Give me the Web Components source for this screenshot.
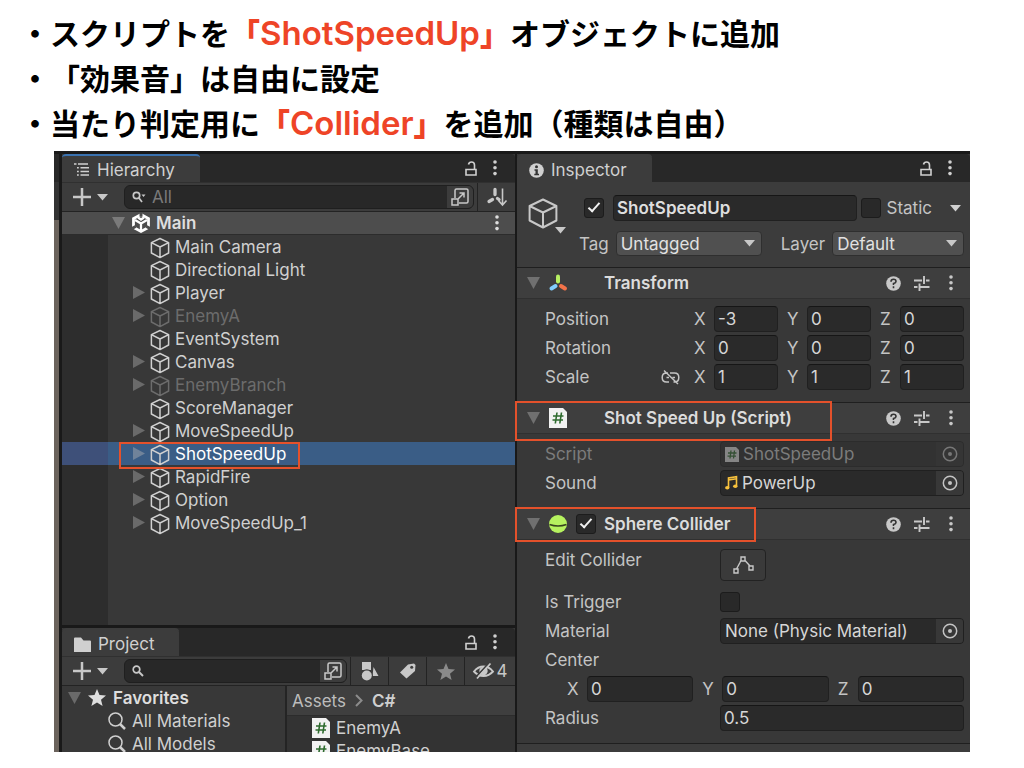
<!DOCTYPE html>
<html lang="ja">
<head>
<meta charset="utf-8">
<meta name="viewport" content="width=device-width, initial-scale=1">
<title>ShotSpeedUp</title>
<style>
  body { margin: 0; background: #fff; }
</style>
</head>
<body>
<lesson-slide></lesson-slide>

<script>
const BASE = `
  *, *::before, *::after { box-sizing: border-box; }
  button, input, select { font: inherit; font-optical-sizing: inherit; color: inherit; margin: 0; }
  button { display: inline-flex; align-items: center; justify-content: center; padding: 0; border: 0; background: none; }
`;

function component(name, css, html, setup) {
  const template = document.createElement('template');
  template.innerHTML = `<style>${BASE}${css}</style>${html}`;
  customElements.define(name, class extends HTMLElement {
    constructor() {
      super();
      this.attachShadow({ mode: 'open' }).append(template.content.cloneNode(true));
    }
    connectedCallback() {
      if (setup && !this.ready) { this.ready = true; setup(this, this.shadowRoot); }
    }
  });
}

/* name: [width, height, drawing] */
const ICONS = {
  cube: [20, 22, '<path d="M10 1.5 18.6 5.6V16L10 20.6 1.4 16V5.6ZM1.4 5.6 10 10l8.600-4.400M10 10v10.600" fill="none" stroke="currentColor" stroke-width="1.500" stroke-linejoin="round"/>'],
  bigcube: [30, 31, '<path d="M15 1.500 28.400 8v14.500L15 29.500 1.600 22.500V8ZM1.600 8 15 14.500 28.400 8M15 14.500v15" fill="none" stroke="currentColor" stroke-width="2" stroke-linejoin="round"/>'],
  down: [11, 8, '<path d="M0 1h11L5.500 7.500Z" fill="currentColor"/>'],
  fold: [13, 12, '<path d="M0 0h13L6.500 12Z" fill="currentColor"/>'],
  right: [12, 13, '<path d="M0 0 12 6.500 0 13Z" fill="currentColor"/>'],
  plus: [18, 18, '<path d="M9 0v18M0 9h18" stroke="currentColor" stroke-width="2.500"/>'],
  list: [16, 14, '<path d="M0 1h2.500M4 1H14M6.500 4.700H15M6.500 8.400H15M6.500 12H15M3 4.700h1.800M3 8.400h1.800M3 12h1.800" stroke="currentColor" stroke-width="1.500"/>'],
  info: [15, 15, '<circle cx="7.500" cy="7.500" r="7.300" fill="currentColor"/><circle cx="7.500" cy="3.800" r="1.500" fill="#333"/><path d="M5.500 6.300h3.300v4.500h1.200v1.400H5.300v-1.400h1.200V7.700h-1Z" fill="#333"/>'],
  folder: [17, 15, '<path d="M0 1.500Q0 .5 1 .5h6l2.500 3H16q1 0 1 1V15H0Z" fill="currentColor"/>'],
  lock: [12, 15, '<path d="M1 8.500h10v5.500H1ZM9.500 8V4Q9.500 1 6.500 1 4 1 3.500 3.500" fill="none" stroke="currentColor" stroke-width="1.600"/>'],
  dots: [4, 16, '<g fill="currentColor"><circle cx="2" cy="2" r="1.800"/><circle cx="2" cy="7.800" r="1.800"/><circle cx="2" cy="13.600" r="1.800"/></g>'],
  searchmenu: [14, 12, '<circle cx="4.500" cy="4.500" r="3.200" fill="none" stroke="currentColor" stroke-width="1.700"/><path d="m7 7 3 4" stroke="currentColor" stroke-width="1.700"/><path d="M9.500 3.500h4L11.500 6Z" fill="currentColor"/>'],
  search: [12, 12, '<circle cx="4.500" cy="4.500" r="3.300" fill="none" stroke="currentColor" stroke-width="1.700"/><path d="m7 7 4 4" stroke="currentColor" stroke-width="2"/>'],
  find: [18, 18, '<circle cx="7.500" cy="7.500" r="6.500" fill="none" stroke="currentColor" stroke-width="1.500"/><path d="m12 12 5 5" stroke="currentColor" stroke-width="2.500"/>'],
  expand: [18, 18, '<path d="M4 10V2.500Q4 1 5.500 1H15.500Q17 1 17 2.500V13.500Q17 15 15.500 15H8M1 11h6v6H1ZM7.500 10.500 13 5M8.500 5H13V9.500" fill="none" stroke="currentColor" stroke-width="1.500"/>'],
  sort: [20, 18, '<g stroke="currentColor" fill="none"><path d="M8 1.500v5M5.500 11.500 2 13.500M10.500 10.500l1.500 1" stroke-width="3.300" stroke-linecap="round"/><path d="M15.500.5V17M11.500 12.500l4 4.500 4-4.500" stroke-width="1.600"/></g>'],
  scene: [18, 20, '<path d="M9 1.500 16.500 5.500v9L9 18.500 1.500 14.500v-9Z" fill="none" stroke="currentColor" stroke-width="2.800"/><path d="M9 0v3.500M0 15.500l3.500-2M18 15.500l-3.500-2" stroke="#4d4d4d" stroke-width="3"/><path d="M9 17.500V10.500L3 7M9 10.500 15 7M6 4.500 9 6.500l3-2" fill="none" stroke="currentColor" stroke-width="2.300"/>'],
  star: [18, 17, '<path d="m9 0 2.500 6 6.500.5-5 4.200L14.600 17 9 13.500 3.400 17 5 10.700 0 6.500 6.500 6Z" fill="currentColor"/>'],
  shapes: [18, 19, '<path d="M1 0h9v8H1ZM12.500 5 17.500 14h-6Z" fill="currentColor"/><circle cx="5.800" cy="13.300" r="6" fill="#3c3c3c"/><circle cx="5.800" cy="13.500" r="5" fill="currentColor"/>'],
  tag: [16, 16, '<path d="M8 1.500 14 .5 15.500 2 15 8 6.500 15.500 0 9.500Z" fill="currentColor"/><circle cx="11.700" cy="4.300" r="1.500" fill="#3c3c3c"/>'],
  hidden: [21, 16, '<path d="M1 8.500Q5 3.500 10.500 3.500T20 8.500Q16 13 10.500 13T1 8.500Z" fill="none" stroke="currentColor" stroke-width="1.900"/><circle cx="10.500" cy="8" r="4.200" fill="currentColor"/><path d="M2.500 14.500 16 0" stroke="#3c3c3c" stroke-width="1.800"/><path d="M4 15.500 17.500.5" stroke="currentColor" stroke-width="1.800"/>'],
  chevron: [8, 13, '<path d="m1 1 5.500 5.500L1 12" fill="none" stroke="currentColor" stroke-width="2"/>'],
  script: [18, 20, '<path d="M0 0h14l4 4v16H0Z" fill="#f2f2f2"/><path d="M8 4.500 6.300 15.500M12.500 4.500l-1.700 11M4 8h10.500M3.500 12H14" stroke="#2e6b2e" stroke-width="1.600"/>'],
  scriptsmall: [14, 15, '<path d="M0 0h11l3 3v12H0Z" fill="#858585"/><path d="M6 3.500l-1 8M9.500 3.500l-1 8M3 6h8.500M2.500 9.200H11" stroke="#355035" stroke-width="1.300"/>'],
  move: [18, 18, '<g stroke-width="4" stroke-linecap="round"><path d="M9 2.500v5" stroke="#b8f062"/><path d="M6.500 12 2.500 14.500" stroke="#82cfff"/><path d="m12 12 4 2.500" stroke="#f27249"/></g>'],
  sphere: [18, 18, '<circle cx="9" cy="9" r="9" fill="#b6f25f"/><path d="M.5 9.500Q9 12.500 17.500 9.500" fill="none" stroke="#38451f" stroke-width="1.500"/>'],
  music: [13, 14, '<path d="M3.500 11.500V2l8-1.300V10M3.500 4 11.500 2.700" fill="none" stroke="#f7c13d" stroke-width="1.600"/><ellipse cx="2.300" cy="11.800" rx="2.200" ry="1.800" fill="#f7c13d"/><ellipse cx="10.300" cy="10.300" rx="2.200" ry="1.800" fill="#f7c13d"/>'],
  help: [15, 15, '<circle cx="7.500" cy="7.500" r="7.300" fill="currentColor"/><path d="M5 5.800Q5 3.300 7.500 3.300T10 5.500Q10 6.800 7.500 7.600V9.100M7.500 10.300v2" fill="none" stroke="#333" stroke-width="1.600"/>'],
  sliders: [16, 15, '<path d="M0 4.500h8M12 4.500h3.500M10 0v8M0 11h3.500M7 11h8.500M5.500 7.500v7.500M9 4.500h2M5 11h2" stroke="currentColor" stroke-width="1.900" fill="none"/>'],
  target: [16, 16, '<circle cx="8" cy="8" r="6.700" fill="none" stroke="currentColor" stroke-width="1.500"/><circle cx="8" cy="8" r="2" fill="currentColor"/>'],
  unlink: [19, 15, '<path d="M7 3H5.500Q1.200 3 1.200 7.500T5.500 12H8M12.500 12h1q4.300 0 4.300-4.500T13.500 3H9M5.500 7.500H8M11.500 7.500h2.500M3 .5l14 13.500" fill="none" stroke="currentColor" stroke-width="1.500"/>'],
  edit: [21, 18, '<g fill="none" stroke="currentColor" stroke-width="1.400"><path d="M1 13h4v4H1ZM8 1h4v4H8ZM16 10h4v4h-4ZM3.500 13 7 6.500Q7.500 5 8 4.500M12 4.500 17 10"/></g>']
};

component('ui-icon', ':host { display: inline-flex; flex: none; } svg { display: block; overflow: visible; }', '',
  (host, root) => {
    const [w, h, art] = ICONS[host.getAttribute('name')];
    root.innerHTML += `<svg width="${w}" height="${h}" viewBox="0 0 ${w} ${h}" aria-hidden="true">${art}</svg>`;
  });

function makeIcon(name) {
  const icon = document.createElement('ui-icon');
  icon.setAttribute('name', name);
  return icon;
}

/* Instruction line with a middle dot in front */
component('note-line', `
  :host { display: block; font: 700 30px/45px "Noto Sans CJK JP", sans-serif; text-spacing-trim: space-all; color: #000; }
  ::slotted(b) { color: #ee4427; }
`, '・<slot></slot>');

component('latin-word', `
  :host { font: 600 33px/30px "Inter", sans-serif; }
`, '<slot></slot>');

/* Red outline laid over a highlighted item */
component('mark-box', `
  :host { position: absolute; z-index: 2; box-sizing: border-box; border: 2px solid #e4512b; pointer-events: none; }
`, '');

/* Tab strip at the top of a panel */
component('panel-tabs', `
  :host { display: flex; height: 28px; flex: none; background: #282828; border-radius: 4px 4px 0 0; color: #d0d0d0; }
  .tab { display: flex; align-items: center; gap: 7px; padding: 2px 25px 0 12px; background: #3c3c3c; border-radius: 4px 4px 0 0; border-top: 2px solid #3c3c3c; }
  :host([active]) .tab { border-top-color: #3a72b0; }
  .tools { margin-left: auto; display: flex; align-items: center; gap: 16px; padding-right: 18px; }
`, `
  <div class="tab"><span></span></div>
  <div class="tools">
    <button aria-label="Lock"><ui-icon name="lock"></ui-icon></button>
    <button aria-label="Menu"><ui-icon name="dots"></ui-icon></button>
  </div>
`, (host, root) => {
  root.querySelector('.tab').prepend(makeIcon(host.getAttribute('icon')));
  root.querySelector('.tab span').textContent = host.getAttribute('label');
});

component('panel-toolbar', `
  :host { display: flex; height: 30px; flex: none; background: #3c3c3c; border-top: 1px solid #303030; border-bottom: 1px solid #232323; color: #c8c8c8; }
  .add { gap: 6px; padding-left: 10px; width: 46px; }
  .search { flex: 1; min-width: 0; display: flex; align-items: center; align-self: center; height: 24px; margin: 0 3px 0 16px; padding-left: 7px; gap: 6px; background: #282828; border: 1px solid #1f1f1f; border-radius: 6px; overflow: hidden; }
  input { flex: 1; min-width: 0; width: 0; border: 0; padding: 0; background: none; outline: 0; }
  input::placeholder { color: #7a7a7a; opacity: 1; }
  .open { width: 26px; align-self: stretch; background: #3c3c3c; }
`, `
  <button class="add" aria-label="Create"><ui-icon name="plus"></ui-icon><ui-icon name="down"></ui-icon></button>
  <div class="search">
    <input type="text" aria-label="Search">
    <button class="open" aria-label="Open search"><ui-icon name="expand"></ui-icon></button>
  </div>
  <slot></slot>
`, (host, root) => {
  root.querySelector('.search').prepend(makeIcon(host.getAttribute('icon')));
  root.querySelector('input').placeholder = host.getAttribute('placeholder') || '';
});

component('tool-button', `
  :host { display: flex; flex: none; width: 38px; border-left: 1px solid #232323; }
  :host([wide]) { width: 51px; }
  button { flex: 1; gap: 3px; }
`, '<button><slot></slot></button>', (host, root) => {
  root.querySelector('button').setAttribute('aria-label', host.getAttribute('label'));
});

/* One object of the scene */
component('tree-row', `
  :host { display: flex; position: relative; align-items: center; height: 23px; padding-left: 71px; color: #d0d0d0; white-space: nowrap; }
  :host([off]) { color: #6c6c6c; }
  :host([selected]) { background: linear-gradient(90deg, #3e5079 46px, #3a5d86 46px); color: #fff; }
  .fold { width: 17px; height: 13px; color: #6a6a6a; flex: none; }
  :host([selected]) .fold { color: #70839a; }
  :host([selected]) .cube { color: #d0d0d0; }
  :host(:not([parent])) .fold { visibility: hidden; }
  .cube { margin-right: 5px; margin-top: 2px; }
  mark-box { left: 57px; top: 0; bottom: -4px; width: 181px; }
  :host(:not([selected])) mark-box { display: none; }
`, '<ui-icon class="fold" name="right"></ui-icon><ui-icon class="cube" name="cube"></ui-icon><slot></slot><mark-box></mark-box>');

component('hierarchy-panel', `
  :host { display: flex; flex-direction: column; flex: none; height: 471px; background: #383838; }
  .scene { display: flex; align-items: center; flex: none; height: 23px; padding: 0 16px 0 50px; background: #4d4d4d; border-bottom: 1px solid #2c2c2c; font-weight: 600; color: #dedede; }
  .scene .fold { color: #7a7a7a; margin-right: 7px; }
  .scene .logo { color: #fff; margin-right: 6px; }
  .scene button { margin-left: auto; }
  .tree { flex: 1; min-height: 0; background: linear-gradient(90deg, #2d2d2d 46px, #383838 46px); }
`, `
  <panel-tabs active icon="list" label="Hierarchy"></panel-tabs>
  <panel-toolbar icon="searchmenu" placeholder="All">
    <tool-button label="Sort"><ui-icon name="sort"></ui-icon></tool-button>
  </panel-toolbar>
  <div class="scene">
    <ui-icon class="fold" name="fold"></ui-icon><ui-icon class="logo" name="scene"></ui-icon>Main
    <button aria-label="Scene menu"><ui-icon name="dots"></ui-icon></button>
  </div>
  <div class="tree">
    <tree-row>Main Camera</tree-row>
    <tree-row>Directional Light</tree-row>
    <tree-row parent>Player</tree-row>
    <tree-row parent off>EnemyA</tree-row>
    <tree-row>EventSystem</tree-row>
    <tree-row parent>Canvas</tree-row>
    <tree-row parent off>EnemyBranch</tree-row>
    <tree-row>ScoreManager</tree-row>
    <tree-row parent>MoveSpeedUp</tree-row>
    <tree-row parent selected>ShotSpeedUp</tree-row>
    <tree-row parent>RapidFire</tree-row>
    <tree-row parent>Option</tree-row>
    <tree-row parent>MoveSpeedUp_1</tree-row>
  </div>
`);

component('project-panel', `
  :host { display: flex; flex-direction: column; flex: 1; min-height: 0; background: #383838; color: #d0d0d0; }
  .body { flex: 1; min-height: 0; display: flex; overflow: hidden; }
  .saved { flex: 224; min-width: 0; }
  .files { flex: 229; min-width: 0; border-left: 2px solid #242424; background: #333; }
  .row { display: flex; align-items: center; height: 23px; gap: 6px; padding-left: 46px; }
  .root { padding-left: 6px; gap: 7px; font-weight: 600; color: #dedede; }
  .root .fold { color: #6a6a6a; }
  .files .row { padding-left: 25px; }
  nav { display: flex; align-items: center; gap: 9px; height: 30px; padding-left: 5px; background: #3f3f3f; border-bottom: 1px solid #2c2c2c; }
  nav ui-icon { color: #8c8c8c; }
  a { color: #bcbcbc; text-decoration: none; }
  a[aria-current] { font-weight: 600; color: #cfcfcf; }
  .dim { color: #8a8a8a; }
`, `
  <panel-tabs icon="folder" label="Project"></panel-tabs>
  <panel-toolbar icon="search">
    <tool-button label="Filter by type"><ui-icon name="shapes"></ui-icon></tool-button>
    <tool-button label="Filter by label"><ui-icon name="tag"></ui-icon></tool-button>
    <tool-button label="Favorite"><ui-icon class="dim" name="star"></ui-icon></tool-button>
    <tool-button wide label="Hidden packages"><ui-icon name="hidden"></ui-icon>4</tool-button>
  </panel-toolbar>
  <div class="body">
    <div class="saved">
      <div class="row root"><ui-icon class="fold" name="fold"></ui-icon><ui-icon name="star"></ui-icon>Favorites</div>
      <div class="row"><ui-icon name="find"></ui-icon>All Materials</div>
      <div class="row"><ui-icon name="find"></ui-icon>All Models</div>
    </div>
    <div class="files">
      <nav aria-label="Folder"><a href="#assets">Assets</a><ui-icon name="chevron"></ui-icon><a href="#cs" aria-current="page">C#</a></nav>
      <div class="row"><ui-icon name="script"></ui-icon>EnemyA</div>
      <div class="row"><ui-icon name="script"></ui-icon>EnemyBase</div>
    </div>
  </div>
`);

component('check-box', `
  :host { display: inline-flex; flex: none; }
  input { appearance: none; width: 20px; height: 20px; background: #292929; border: 1px solid #1c1c1c; border-radius: 3px; display: grid; place-items: center; }
  input:checked::before { content: ""; width: 6px; height: 12px; border: solid #f0f0f0; border-width: 0 2px 2px 0; transform: rotate(42deg); margin-bottom: 4px; }
`, '<input type="checkbox">', (host, root) => {
  const box = root.querySelector('input');
  box.checked = host.hasAttribute('checked');
  box.setAttribute('aria-label', host.getAttribute('label'));
});

component('drop-down', `
  :host { display: flex; position: relative; min-width: 0; }
  select { appearance: none; flex: 1; min-width: 0; height: 25px; padding: 0 24px 0 4px; background: #505050; border: 1px solid #2f2f2f; border-radius: 4px; color: #e2e2e2; }
  ui-icon { position: absolute; right: 7px; top: 8px; color: #c8c8c8; pointer-events: none; }
`, '<select><option></option></select><ui-icon name="down"></ui-icon>', (host, root) => {
  root.querySelector('option').textContent = host.getAttribute('value');
  root.querySelector('select').setAttribute('aria-label', host.getAttribute('label'));
});

component('text-field', `
  :host { display: flex; min-width: 0; }
  input { flex: 1; min-width: 0; width: 0; height: 26px; padding: 0 3px; background: #2a2a2a; border: 1px solid #202020; border-top-color: #161616; border-radius: 4px; color: #d6d6d6; }
  :host([strong]) input { font-weight: 600; color: #dedede; }
`, '<input type="text">', (host, root) => {
  const field = root.querySelector('input');
  field.value = host.getAttribute('value');
  field.setAttribute('aria-label', host.getAttribute('label'));
});

component('vector-field', `
  :host { display: flex; gap: 9px; min-width: 0; }
  label { flex: 1; min-width: 0; display: flex; align-items: center; }
  label span { width: 20px; flex: none; }
  input { flex: 1; min-width: 0; width: 0; height: 26px; padding: 0 3px; background: #2a2a2a; border: 1px solid #202020; border-top-color: #161616; border-radius: 4px; color: #d6d6d6; }
`, `
  <label><span>X</span><input type="text"></label>
  <label><span>Y</span><input type="text"></label>
  <label><span>Z</span><input type="text"></label>
`, (host, root) => {
  const values = host.getAttribute('value').split(' ');
  root.querySelectorAll('input').forEach((field, i) => { field.value = values[i]; });
});

component('object-field', `
  :host { display: flex; box-sizing: border-box; align-items: center; height: 26px; min-width: 0; padding-left: 4px; gap: 4px; background: #2a2a2a; border: 1px solid #202020; border-radius: 4px; overflow: hidden; color: #d6d6d6; white-space: nowrap; }
  :host([off]) { background: #323232; border-color: #2c2c2c; color: #7c7c7c; }
  button { width: 27px; align-self: stretch; margin-left: auto; background: #383838; color: #c4c4c4; flex: none; }
  :host([off]) button { color: #777; background: #353535; }
`, '<slot></slot><button aria-label="Select object"><ui-icon name="target"></ui-icon></button>');

/* Property name on the left, its control on the right */
component('prop-row', `
  :host { display: grid; grid-template-columns: 175fr 244fr; align-items: center; min-height: 26px; padding: 0 6px 0 28px; }
  :host([vector]) { grid-template-columns: 149fr 270fr; }
  :host([tall]) { align-items: start; height: 39px; line-height: 26px; }
  :host([off]) .name { color: #7c7c7c; }
  .name { display: flex; align-items: center; justify-content: space-between; padding-right: 14px; }
  ::slotted(*) { min-width: 0; }
`, '<div class="name"><span></span><slot name="aside"></slot></div><slot></slot>', (host, root) => {
  root.querySelector('.name span').textContent = host.getAttribute('label');
});

component('inspector-component', `
  :host { display: block; border-top: 1px solid #1f1f1f; }
  header { position: relative; display: flex; align-items: center; height: 31px; padding: 0 17px 0 10px; background: #3e3e3e; border-bottom: 1px solid #303030; color: #c8c8c8; }
  .fold { color: #707070; margin-right: 9px; }
  .kind { display: flex; width: 18px; margin-right: 9px; }
  .check { width: 28px; display: flex; }
  h2 { margin: 0; font: inherit; font-weight: 600; color: #dcdcdc; }
  .tools { margin-left: auto; display: flex; gap: 13px; align-items: center; }
  .tools button:last-child { margin-left: 6px; }
  .body { display: flex; flex-direction: column; gap: 3px; padding: 7px 0 12px; }
  mark-box { left: -2px; top: -2px; }
`, `
  <header>
    <ui-icon class="fold" name="fold"></ui-icon>
    <span class="kind"><slot name="icon"></slot></span>
    <span class="check"><slot name="check"></slot></span>
    <h2></h2>
    <div class="tools">
      <button aria-label="Help"><ui-icon name="help"></ui-icon></button>
      <button aria-label="Presets"><ui-icon name="sliders"></ui-icon></button>
      <button aria-label="Menu"><ui-icon name="dots"></ui-icon></button>
    </div>
  </header>
  <div class="body"><slot></slot></div>
`, (host, root) => {
  root.querySelector('h2').textContent = host.getAttribute('label');
  if (host.hasAttribute('mark')) {
    const [w, h] = host.getAttribute('mark').split(' ');
    const box = document.createElement('mark-box');
    box.style.width = w + 'px';
    box.style.height = h + 'px';
    root.querySelector('header').append(box);
  }
});

component('inspector-panel', `
  :host { display: block; background: #383838; color: #c4c4c4; }
  .object { display: flex; background: #3c3c3c; padding: 13px 6px 11px 10px; gap: 21px; }
  .pick { position: relative; align-self: flex-start; margin-top: 3px; width: 31px; height: 36px; align-items: flex-start; color: #c8c8c8; }
  .pick ui-icon + ui-icon { position: absolute; right: -8px; bottom: 0; }
  .lines { flex: 1; min-width: 0; display: flex; flex-direction: column; gap: 10px; }
  .line { display: flex; align-items: center; }
  .first { padding-left: 5px; }
  .name { flex: 1; margin: 0 4px 0 9px; }
  .static { margin: 0 18px 0 6px; }
  .first button { margin-right: 3px; color: #d0d0d0; }
  .tag { flex: 144; margin: 0 19px 0 7px; }
  .layer { flex: 130; margin-left: 7px; }
  .edit { width: 46px; height: 32px; margin-top: 2px; border: 1px solid #222; border-radius: 4px; background: #3a3a3a; color: #c8c8c8; }
  .center { margin: 0 6px 0 50px; }
  .end { height: 9px; background: #3c3c3c; border-top: 1px solid #1f1f1f; }
`, `
  <panel-tabs icon="info" label="Inspector"></panel-tabs>
  <div class="object">
    <button class="pick" aria-label="Icon"><ui-icon name="bigcube"></ui-icon><ui-icon name="down"></ui-icon></button>
    <div class="lines">
      <div class="line first">
        <check-box checked label="Active"></check-box>
        <text-field class="name" strong label="Name" value="ShotSpeedUp"></text-field>
        <check-box label="Static"></check-box>
        <span class="static">Static</span>
        <button aria-label="Static flags"><ui-icon name="down"></ui-icon></button>
      </div>
      <div class="line">
        <span>Tag</span><drop-down class="tag" label="Tag" value="Untagged"></drop-down>
        <span>Layer</span><drop-down class="layer" label="Layer" value="Default"></drop-down>
      </div>
    </div>
  </div>
  <inspector-component label="Transform">
    <ui-icon slot="icon" name="move"></ui-icon>
    <prop-row vector label="Position"><vector-field value="-3 0 0"></vector-field></prop-row>
    <prop-row vector label="Rotation"><vector-field value="0 0 0"></vector-field></prop-row>
    <prop-row vector label="Scale"><ui-icon slot="aside" name="unlink"></ui-icon><vector-field value="1 1 1"></vector-field></prop-row>
  </inspector-component>
  <inspector-component label="Shot Speed Up (Script)" mark="317 40">
    <ui-icon slot="icon" name="script"></ui-icon>
    <prop-row off label="Script"><object-field off><ui-icon name="scriptsmall"></ui-icon>ShotSpeedUp</object-field></prop-row>
    <prop-row label="Sound"><object-field><ui-icon name="music"></ui-icon>PowerUp</object-field></prop-row>
  </inspector-component>
  <inspector-component label="Sphere Collider" mark="241 35">
    <ui-icon slot="icon" name="sphere"></ui-icon>
    <check-box slot="check" checked label="Enabled"></check-box>
    <prop-row tall label="Edit Collider"><button class="edit" aria-label="Edit Collider"><ui-icon name="edit"></ui-icon></button></prop-row>
    <prop-row label="Is Trigger"><check-box label="Is Trigger"></check-box></prop-row>
    <prop-row label="Material"><object-field>None (Physic Material)</object-field></prop-row>
    <prop-row label="Center"></prop-row>
    <vector-field class="center" value="0 0 0"></vector-field>
    <prop-row label="Radius"><text-field label="Radius" value="0.5"></text-field></prop-row>
  </inspector-component>
  <div class="end"></div>
`);

component('editor-window', `
  :host { display: flex; padding-top: 3px; background: #191919; font: 400 17px/22px "Inter", sans-serif; font-optical-sizing: none; overflow: hidden; }
  .edge { width: 5px; margin-right: 3px; flex: none; background: linear-gradient(#282828 28px, #333 28px 66px, #6b635c 66px); }
  .left { flex: 1; min-width: 0; display: flex; flex-direction: column; gap: 3px; contain: size; }
  inspector-panel { flex: 1; min-width: 0; margin-left: 2px; }
`, `
  <div class="edge"></div>
  <div class="left">
    <hierarchy-panel></hierarchy-panel>
    <project-panel></project-panel>
  </div>
  <inspector-panel></inspector-panel>
`);

component('lesson-slide', `
  :host { display: block; padding: 10px 0 16px; }
  .notes { padding: 0 20px; margin-bottom: 6px; }
  editor-window { margin: 0 54px; }
`, `
  <div class="notes">
    <note-line>スクリプトを<b>「<latin-word>ShotSpeedUp</latin-word>」</b>オブジェクトに追加</note-line>
    <note-line>「効果音」は自由に設定</note-line>
    <note-line>当たり判定用に<b>「<latin-word>Collider</latin-word>」</b>を追加（種類は自由）</note-line>
  </div>
  <editor-window></editor-window>
`);
</script>
</body>
</html>
